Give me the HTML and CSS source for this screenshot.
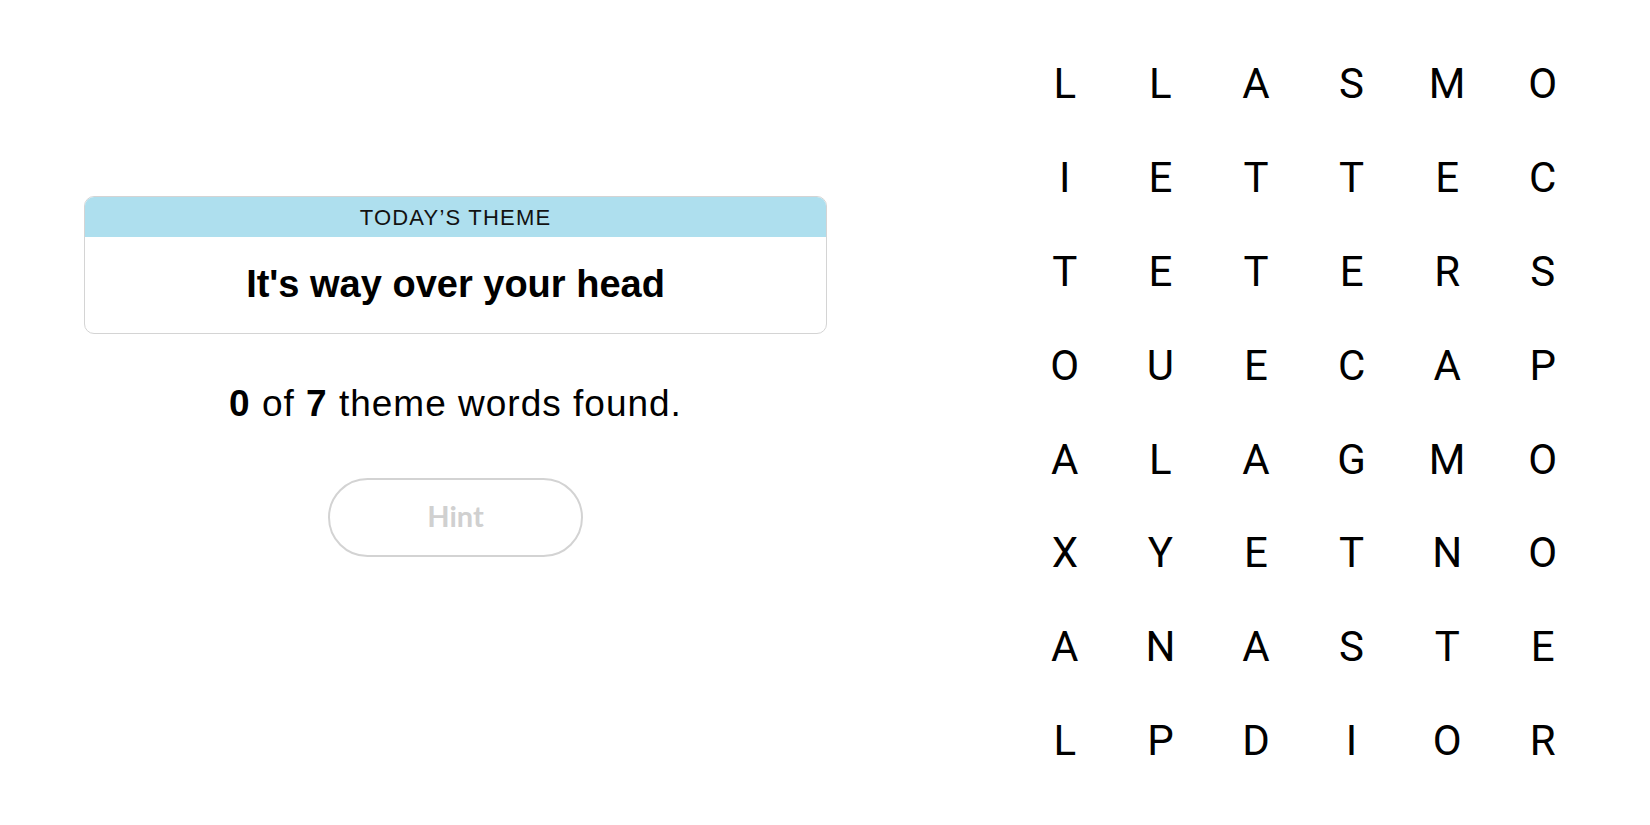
FILE: index.html
```html
<!DOCTYPE html>
<html lang="en">
<head>
<meta charset="utf-8">
<title>Strands</title>
<link rel="stylesheet" href="styles.css">
</head>
<body>
<main class="game">
  <section class="side">
    <div class="theme-card">
      <div class="theme-head">TODAY’S THEME</div>
      <div class="theme-body">It's way over your head</div>
    </div>
    <p class="count"><b>0</b> of <b>7</b> theme words found.</p>
    <button class="hint" type="button">Hint</button>
  </section>
  <section class="board">
    <span>L</span><span>L</span><span>A</span><span>S</span><span>M</span><span>O</span>
    <span>I</span><span>E</span><span>T</span><span>T</span><span>E</span><span>C</span>
    <span>T</span><span>E</span><span>T</span><span>E</span><span>R</span><span>S</span>
    <span>O</span><span>U</span><span>E</span><span>C</span><span>A</span><span>P</span>
    <span>A</span><span>L</span><span>A</span><span>G</span><span>M</span><span>O</span>
    <span>X</span><span>Y</span><span>E</span><span>T</span><span>N</span><span>O</span>
    <span>A</span><span>N</span><span>A</span><span>S</span><span>T</span><span>E</span>
    <span>L</span><span>P</span><span>D</span><span>I</span><span>O</span><span>R</span>
  </section>
</main>
</body>
</html>
```

FILE: styles.css
```css
* { box-sizing: border-box; }

html, body {
  margin: 0;
  padding: 0;
  background: #ffffff;
  color: #000000;
  font-family: "Liberation Sans", Arial, sans-serif;
}

.game {
  display: flex;
  align-items: flex-start;
  width: 1650px;
  height: 825px;
  overflow: hidden;
}

.side {
  width: 743px;
  margin-left: 84px;
  padding-top: 196px;
  display: flex;
  flex-direction: column;
  align-items: center;
}

.theme-card {
  width: 743px;
  border: 1px solid #d4d4d4;
  border-radius: 10px;
  overflow: hidden;
}

.theme-head {
  height: 40px;
  background: #aedfee;
  display: flex;
  align-items: center;
  justify-content: center;
  font-size: 22px;
  letter-spacing: 1.2px;
  color: #121212;
  padding-top: 1px;
}

.theme-body {
  height: 96px;
  display: flex;
  align-items: center;
  justify-content: center;
  font-weight: 700;
  font-size: 38px;
  color: #000;
  padding-bottom: 2px;
}

.count {
  margin: 48px 0 0;
  height: 44px;
  line-height: 44px;
  font-size: 37px;
  letter-spacing: 1px;
  color: #000;
}

.count b { font-weight: 700; }

.hint {
  margin-top: 52px;
  width: 255px;
  height: 79px;
  border: 2px solid #d3d3d3;
  border-radius: 40px;
  background: #fff;
  font-family: Lato, "Liberation Sans", sans-serif;
  font-weight: 700;
  font-size: 29px;
  color: #d0d0d0;
  padding: 0 0 5px;
}

.board {
  margin-left: 190px;
  margin-top: 37px;
  display: grid;
  grid-template-columns: repeat(6, 95.6px);
  grid-template-rows: repeat(8, 93.8px);
}

.board span {
  display: flex;
  align-items: center;
  justify-content: center;
  font-family: Roboto, "Liberation Sans", sans-serif;
  font-size: 42px;
  color: #000;
}
```
